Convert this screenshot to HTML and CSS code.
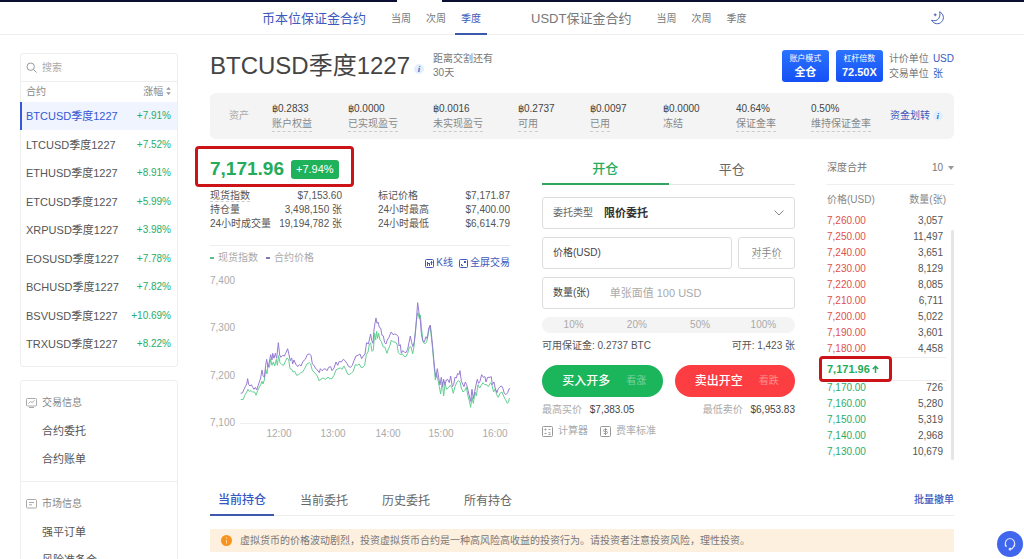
FILE: index.html
```html
<!DOCTYPE html>
<html lang="zh-CN">
<head>
<meta charset="utf-8">
<title>BTCUSD季度1227</title>
<link rel="stylesheet" href="styles.css">
</head>
<body>
<div class="top-strip"><span class="strip-gap"></span></div>
<header class="site-header">
  <nav class="contract-nav">
    <a class="nav-title active" href="#coin">币本位保证金合约</a>
    <a class="nav-sub" href="#c1">当周</a>
    <a class="nav-sub" href="#c2">次周</a>
    <a class="nav-sub active" href="#c3">季度</a>
  </nav>
  <nav class="contract-nav">
    <a class="nav-title" href="#usdt">USDT保证金合约</a>
    <a class="nav-sub" href="#u1">当周</a>
    <a class="nav-sub" href="#u2">次周</a>
    <a class="nav-sub" href="#u3">季度</a>
  </nav>
  <button class="theme-btn" aria-label="夜间模式">
    <svg width="14" height="14" viewBox="0 0 14 14" fill="none" stroke="#4560b8" stroke-width="1"><path d="M8.600.8a6.200 6.200 0 1 1-8 8.400c3 1.300 5.800.3 7.200-1.900C9 5.400 9.200 3 8.600.8z"/><path d="M4.200 2.400v2.800M2.800 3.800h2.800"/></svg>
  </button>
</header>

<div class="page">
  <aside class="sidebar">
    <section class="panel">
      <div class="search">
        <svg width="11" height="11" viewBox="0 0 11 11" fill="none" stroke="#999"><circle cx="4.700" cy="4.700" r="3.700"/><path d="M7.500 7.500l3 3"/></svg>
        <input type="text" placeholder="搜索" aria-label="搜索">
      </div>
      <table class="contracts">
        <thead><tr><th>合约</th><th>涨幅 <svg width="5" height="8" viewBox="0 0 5 8" fill="#999"><path d="M2.500 0L4.800 2.800H.2zM2.500 8L4.800 5.200H.2z"/></svg></th></tr></thead>
        <tbody>
          <tr class="current"><td>BTCUSD季度1227</td><td>+7.91%</td></tr>
          <tr><td>LTCUSD季度1227</td><td>+7.52%</td></tr>
          <tr><td>ETHUSD季度1227</td><td>+8.91%</td></tr>
          <tr><td>ETCUSD季度1227</td><td>+5.99%</td></tr>
          <tr><td>XRPUSD季度1227</td><td>+3.98%</td></tr>
          <tr><td>EOSUSD季度1227</td><td>+7.78%</td></tr>
          <tr><td>BCHUSD季度1227</td><td>+7.82%</td></tr>
          <tr><td>BSVUSD季度1227</td><td>+10.69%</td></tr>
          <tr><td>TRXUSD季度1227</td><td>+8.22%</td></tr>
        </tbody>
      </table>
    </section>
    <section class="panel menu">
      <div class="menu-group">
        <h2><svg width="11" height="10" viewBox="0 0 11 10" fill="none" stroke="#aaa"><rect x=".5" y=".5" width="10" height="7.500" rx="1"/><path d="M2.500 5.500l2-2 1.500 1 2.500-2M3 9.500h5"/></svg>交易信息</h2>
        <a href="#orders">合约委托</a>
        <a href="#bills">合约账单</a>
      </div>
      <div class="menu-group">
        <h2><svg width="11" height="10" viewBox="0 0 11 10" fill="none" stroke="#aaa"><rect x=".5" y=".5" width="10" height="8.500" rx="1"/><path d="M3 3.500h5M3 5.800h3"/></svg>市场信息</h2>
        <a href="#liquidation">强平订单</a>
        <a href="#fund">风险准备金</a>
      </div>
    </section>
  </aside>

  <main class="main">
    <div class="title-row">
      <h1>BTCUSD季度1227</h1>
      <span class="info">i</span>
      <p class="countdown">距离交割还有<br>30天</p>
      <div class="modes">
        <button class="mode"><small>账户模式</small><b>全仓</b></button>
        <button class="mode"><small>杠杆倍数</small><b>72.50X</b></button>
      </div>
      <dl class="units">
        <dt>计价单位</dt><dd><a href="#usd">USD</a></dd>
        <dt>交易单位</dt><dd><a href="#cont">张</a></dd>
      </dl>
    </div>

    <section class="assets">
      <h2>资产</h2>
      <div><b>฿0.2833</b><span class="hint">账户权益</span></div>
      <div><b>฿0.0000</b><span class="hint">已实现盈亏</span></div>
      <div><b>฿0.0016</b><span class="hint">未实现盈亏</span></div>
      <div><b>฿0.2737</b><span class="hint">可用</span></div>
      <div><b>฿0.0097</b><span class="hint">已用</span></div>
      <div><b>฿0.0000</b><span>冻结</span></div>
      <div><b>40.64%</b><span class="hint">保证金率</span></div>
      <div><b>0.50%</b><span class="hint">维持保证金率</span></div>
      <a href="#transfer">资金划转 <span class="info">i</span></a>
    </section>

    <div class="market">
      <section class="quote">
        <div class="price-line"><strong>7,171.96</strong><span class="change">+7.94%</span><i class="mark mark-price"></i></div>
        <div class="stats">
          <dl><dt><span class="hint">现货指数</span></dt><dd>$7,153.60</dd><dt>持仓量</dt><dd>3,498,150 张</dd><dt>24小时成交量</dt><dd>19,194,782 张</dd></dl>
          <dl><dt>标记价格</dt><dd>$7,171.87</dd><dt>24小时最高</dt><dd>$7,400.00</dd><dt>24小时最低</dt><dd>$6,614.79</dd></dl>
        </div>
        <div class="chart-head">
          <p class="legend"><span class="spot">现货指数</span><span class="contract">合约价格</span></p>
          <p class="chart-links">
            <a href="#k"><svg width="9" height="9" viewBox="0 0 9 9" fill="none" stroke="#3d59bd"><rect x=".5" y=".5" width="8" height="8" rx="1"/><path d="M2.500 3v4M4.500 4v3M6.500 2v4M2 4.500h3M5.500 3.500h2"/></svg>K线</a>
            <a href="#full"><svg width="9" height="9" viewBox="0 0 9 9" fill="none" stroke="#3d59bd"><rect x=".5" y=".5" width="8" height="8" rx="1"/><path d="M5 2.500h1.500V4M2.500 5v1.500H4M6.500 2.500L5 4"/></svg>全屏交易</a>
          </p>
        </div>
        <svg class="chart" viewBox="0 0 300 170" role="img" aria-label="价格走势">
          <path d="M30 150.500H300" stroke="#eee"/>
          <g class="axis"><text x="0" y="11">7,400</text><text x="0" y="58">7,300</text><text x="0" y="106">7,200</text><text x="0" y="153">7,100</text></g>
          <g class="axis time"><text x="69" y="164">12:00</text><text x="123" y="164">13:00</text><text x="178" y="164">14:00</text><text x="231" y="164">15:00</text><text x="285" y="164">16:00</text></g>
          <g class="series" transform="translate(20 17) scale(.3333)">
            <polyline stroke="#62cf92" points="32,329 40,328 44,316 49,308 54,298 58,304 63,302 68,306 74,306 78,316 83,302 88,292 92,284 96,274 99,282 103,270 107,238 111,252 114,226 118,232 122,208 126,226 130,216 134,228 139,208 142,226 146,197 150,218 156,224 161,226 167,212 171,204 176,208 180,236 185,238 189,246 194,244 200,256 206,254 212,248 218,246 224,236 231,222 238,218 242,222 246,238 251,246 256,250 262,258 267,272 273,268 279,264 286,268 294,262 300,266 306,266 312,256 318,240 325,236 331,234 336,238 342,228 347,238 353,252 359,254 365,248 370,244 376,224 382,226 388,222 393,232 399,232 404,226 409,194 414,186 418,164 422,158 426,184 430,180 434,130 437,150 440,124 443,145 446,130 450,150 454,154 459,170 465,172 471,190 475,178 480,166 484,150 490,156 496,156 501,162 505,188 511,194 517,192 522,199 528,200 533,190 538,172 543,170 548,192 552,170 557,115 561,80 564,68 568,86 571,75 574,110 579,155 584,162 590,156 595,130 600,106 603,130 608,178 612,225 616,270 620,254 624,270 628,290 632,312 637,276 641,318 645,282 650,298 656,292 661,286 666,294 670,310 675,290 680,278 685,272 690,275 694,294 699,306 704,302 709,292 714,318 718,332 722,352 726,322 730,340 735,306 739,318 744,284 749,294 754,286 759,278 764,284 770,284 775,290 782,278 786,286 791,306 796,296 800,314 805,322 810,310 816,306 821,318 826,328 832,340 836,336 838,324"/>
            <polyline stroke="#967bd3" points="32,310 38,308 42,298 46,290 50,282 53,266 56,284 60,288 64,284 68,292 72,298 76,292 80,300 84,288 88,276 92,264 96,240 99,256 103,262 107,226 110,208 114,232 118,216 122,194 126,210 128,190 132,205 136,190 140,205 145,158 149,195 153,202 158,196 163,198 168,188 173,176 177,194 181,212 185,204 188,222 192,210 197,222 203,230 208,224 213,228 219,214 226,208 232,194 238,192 243,196 247,222 252,226 256,234 262,240 268,248 271,236 276,242 281,238 286,236 291,242 296,232 302,230 306,242 312,234 318,216 323,226 328,214 334,216 340,208 345,212 351,220 356,230 362,232 367,226 372,212 378,198 384,196 390,192 395,206 400,198 405,192 408,170 410,158 415,162 418,150 422,132 425,150 429,160 432,120 435,100 438,84 441,100 444,96 448,112 452,114 456,136 460,138 464,158 468,162 472,150 477,142 480,134 484,126 489,134 494,132 500,134 505,140 507,168 511,164 514,190 518,182 523,186 528,188 533,178 537,158 541,138 545,158 549,170 553,155 557,120 560,80 563,38 567,68 571,90 574,130 578,152 583,156 588,140 592,146 596,115 601,106 604,130 608,170 611,205 615,245 618,262 622,236 626,262 630,285 634,262 638,290 641,268 645,284 649,270 653,268 658,278 662,258 667,290 671,284 675,262 679,264 683,250 687,254 690,242 694,272 698,282 702,290 706,276 710,284 714,300 718,318 722,334 726,298 730,326 734,305 738,285 742,268 746,280 750,274 755,254 760,262 765,260 768,276 773,262 780,262 784,260 787,284 792,276 796,296 801,308 805,296 810,290 815,288 819,296 823,310 828,314 833,308 836,300 839,294"/>
          </g>
        </svg>
      </section>

      <form class="order" onsubmit="return false">
        <div class="order-tabs"><button type="button" class="active">开仓</button><button type="button">平仓</button></div>
        <div class="field">
          <label class="soft" for="kind">委托类型</label>
          <select id="kind"><option>限价委托</option></select>
          <svg width="10" height="6" viewBox="0 0 10 6" fill="none" stroke="#888"><path d="M.5.5L5 5 9.500.5"/></svg>
        </div>
        <div class="field-row">
          <div class="field"><label for="price">价格(USD)</label><input id="price" type="text"></div>
          <button type="button" class="rival"><span class="hint">对手价</span></button>
        </div>
        <div class="field"><label for="qty">数量(张)</label><input id="qty" type="text" placeholder="单张面值 100 USD"></div>
        <div class="percents"><button type="button">10%</button><button type="button">20%</button><button type="button">50%</button><button type="button">100%</button></div>
        <p class="pair avail"><span>可用保证金: 0.2737 BTC</span><span>可开: 1,423 张</span></p>
        <div class="actions">
          <button type="button" class="buy">买入开多<small>看涨</small></button>
          <button type="button" class="sell">卖出开空<small>看跌</small></button>
        </div>
        <p class="pair limits"><span>最高买价 <b>$7,383.05</b></span><span>最低卖价 <b>$6,953.83</b></span></p>
        <p class="tools">
          <a href="#calc"><svg width="11" height="11" viewBox="0 0 11 11" fill="none" stroke="#999"><rect x=".5" y=".5" width="10" height="10" rx="1"/><path d="M2.500 3.500h2M3.500 2.500v2M6.500 3.500h2M2.500 7.500h2M6.500 6.800h2M6.500 8.500h2"/></svg>计算器</a>
          <a href="#fees"><svg width="11" height="11" viewBox="0 0 11 11" fill="none" stroke="#999"><rect x=".5" y=".5" width="10" height="10" rx="1"/><path d="M7.200 3.500H4.500a1 1 0 0 0 0 2h2a1 1 0 0 1 0 2H3.800M5.500 2v7"/></svg>费率标准</a>
        </p>
      </form>

      <section class="book">
        <div class="depth"><label for="depth">深度合并</label><select id="depth"><option>10</option></select><svg width="6" height="4" viewBox="0 0 6 4" fill="#999"><path d="M0 0h6L3 4z"/></svg></div>
        <div class="book-body">
          <table>
            <thead><tr><th>价格(USD)</th><th>数量(张)</th></tr></thead>
            <tbody class="asks">
              <tr><td>7,260.00</td><td>3,057</td></tr>
              <tr><td>7,250.00</td><td>11,497</td></tr>
              <tr><td>7,240.00</td><td>3,651</td></tr>
              <tr><td>7,230.00</td><td>8,129</td></tr>
              <tr><td>7,220.00</td><td>8,085</td></tr>
              <tr><td>7,210.00</td><td>6,711</td></tr>
              <tr><td>7,200.00</td><td>5,022</td></tr>
              <tr><td>7,190.00</td><td>3,601</td></tr>
              <tr><td>7,180.00</td><td>4,458</td></tr>
            </tbody>
            <tbody class="last"><tr><td colspan="2"><div>7,171.96<svg width="7" height="8" viewBox="0 0 7 8" fill="none" stroke="#1eac59" stroke-width="1.500"><path d="M3.500 8V1.500M.8 4l2.700-2.700L6.200 4"/></svg><i class="mark mark-last"></i></div></td></tr></tbody>
            <tbody class="bids">
              <tr><td>7,170.00</td><td>726</td></tr>
              <tr><td>7,160.00</td><td>5,280</td></tr>
              <tr><td>7,150.00</td><td>5,319</td></tr>
              <tr><td>7,140.00</td><td>2,968</td></tr>
              <tr><td>7,130.00</td><td>10,679</td></tr>
            </tbody>
          </table>
          <span class="scroll-thumb"></span>
        </div>
      </section>
    </div>

    <nav class="position-tabs">
      <button class="active">当前持仓</button><button>当前委托</button><button>历史委托</button><button>所有持仓</button>
      <a href="#cancel">批量撤单</a>
    </nav>
    <p class="notice"><svg width="11" height="11" viewBox="0 0 11 11"><circle cx="5.500" cy="5.500" r="5.500" fill="#f7931e"/><path d="M5.500 2.500v1.300M5.500 5v3.500" stroke="#ffd9a0"/></svg>虚拟货币的价格波动剧烈，投资虚拟货币合约是一种高风险高收益的投资行为。请投资者注意投资风险，理性投资。</p>
  </main>
</div>
<button class="support" aria-label="在线客服">
  <svg width="14" height="14" viewBox="0 0 14 14" fill="none" stroke="#dfe6ff" stroke-width="1.200"><path d="M2.500 9.500C1.500 5 3.500 1.500 7 1.500s5.500 3.500 4.500 8"/><path d="M2.300 7.200l1.200 2.600M11.700 7.200l-1.200 2.600c-.6 1.400-1.600 2.200-3 2.400"/><circle cx="7" cy="12.200" r=".8" fill="#dfe6ff"/></svg>
</button>
</body>
</html>
```
FILE: styles.css
```css
* { box-sizing: border-box; }
body, h1, h2, p, dl, dd { margin: 0; }
body {
  height: 100vh;
  overflow: hidden;
  background: #fff;
  color: #555;
  font: 10px/14px "Liberation Sans", "Noto Sans CJK SC", sans-serif;
}
a { color: #3d59bd; text-decoration: none; }
button, input, select {
  margin: 0;
  padding: 0;
  border: 0;
  background: none;
  color: inherit;
  font: inherit;
  appearance: none;
  outline: 0;
}
button { cursor: pointer; }
h1, h2, th { font-weight: 400; }
b { font-weight: 400; }
svg { flex: none; }
table { border-collapse: collapse; width: 100%; }
th, td { padding: 0; text-align: left; }
th:last-child, td:last-child { text-align: right; }

.top-strip { display: flex; height: 2px; background: #0b0f33; padding-left: 397px; }
.strip-gap { width: 45px; background: #fff; }

.site-header {
  display: flex;
  height: 33px;
  padding: 0 79px 0 262px;
  border-bottom: 1px solid #eee;
}
.contract-nav { display: flex; }
.contract-nav + .contract-nav { margin-left: 41px; }
.nav-title { margin-right: 19px; font-size: 13px; line-height: 33px; color: #777; }
.nav-sub { height: 33px; padding: 0 6px; margin-right: 3px; line-height: 34px; color: #777; }
.nav-sub.active { border-bottom: 2px solid #3d59ad; }
.contract-nav .active { color: #3d59bd; }
.theme-btn { display: flex; align-items: center; margin-left: auto; }

.page {
  display: grid;
  grid-template-columns: 158px minmax(0, 1fr);
  gap: 32px;
  padding: 12px 70px 0 20px;
}
.sidebar { padding-top: 6px; }
.panel { border: 1px solid #eee; border-radius: 3px; margin-bottom: 13px; padding-bottom: 8px; }
.search { display: flex; align-items: center; gap: 5px; height: 28px; padding: 0 5px; border-bottom: 1px solid #eee; }
.search input { flex: 1; min-width: 0; }
::placeholder { color: #aaa; opacity: 1; }
.contracts th { height: 20px; color: #888; }
.contracts tr > :first-child { padding-left: 5px; }
.contracts tr > :last-child { padding-right: 6px; }
.contracts td { height: 28px; color: #27ae67; }
.contracts tr:nth-child(even) td { height: 29px; }
.contracts td:first-child { font-size: 11px; color: #555; }
.contracts .current { background: #f0f4fe; }
.contracts .current td:first-child { color: #3558d4; box-shadow: -1px 0 #3558d4, inset 1px 0 #3558d4; }

.menu { padding: 0; }
.menu-group { padding: 8px 5px; }
.menu-group + .menu-group { border-top: 1px solid #eee; }
.menu-group h2 { display: flex; align-items: center; gap: 5px; height: 28px; font-size: 10px; color: #888; }
.menu-group a { display: block; padding-left: 16px; font-size: 11px; line-height: 28px; color: #555; }

.title-row { display: flex; align-items: center; height: 38px; }
.title-row h1 { font-size: 24px; line-height: 36px; color: #444; }
.info {
  display: inline-block;
  width: 10px;
  height: 10px;
  border-radius: 5px;
  background: #e3effc;
  color: #2f6fd0;
  font: italic bold 9px/10px "Liberation Serif", serif;
  text-align: center;
}
.title-row .info { margin: 6px 9px 0 4px; }
.countdown { color: #777; }
.modes { display: flex; gap: 7px; margin-left: auto; }
.mode {
  display: flex;
  flex-direction: column;
  align-items: center;
  justify-content: center;
  width: 47px;
  height: 32px;
  border-radius: 3px;
  background: linear-gradient(#2b73ff, #1450f5);
  color: #fff;
}
.mode small { font-size: 8px; line-height: 12px; }
.mode b { font-size: 11px; line-height: 14px; font-weight: 700; }
.units { display: grid; grid-template-columns: auto auto; column-gap: 4px; margin-left: 6px; line-height: 15px; color: #777; }
.units dt, .units dd { white-space: nowrap; }

.hint { border-bottom: 1px dashed #ccc; }
.assets {
  display: grid;
  grid-template-columns: 43fr 76fr 85fr 85fr 72fr 73fr 73fr 75fr 79fr 64fr;
  align-items: center;
  height: 46px;
  margin-top: 8px;
  padding-left: 19px;
  border-radius: 6px;
  background: #f4f4f4;
}
.assets > * { min-width: 0; white-space: nowrap; }
.assets h2 { font-size: 10px; color: #aaa; }
.assets div { display: flex; flex-direction: column; align-items: flex-start; }
.assets b { line-height: 15px; color: #444; }
.assets div span { color: #888; line-height: 15px; }

.market {
  display: grid;
  grid-template-columns: 300fr 253fr 127fr;
  column-gap: 32px;
  padding-top: 13px;
}
.market > * { min-width: 0; }
.price-line { position: relative; display: flex; align-items: center; gap: 7px; height: 34px; color: #24ab5c; }
.price-line strong { font-size: 19px; line-height: 34px; }
.change { padding: 0 5px; border-radius: 3px; background: #1fb25a; color: #fff; font-size: 11px; line-height: 19px; }
.mark { position: absolute; border: 3px solid #cc1418; border-radius: 4px; }
.mark-price { left: -15px; top: -6px; width: 159px; height: 41px; }
.mark-last { left: -8px; top: -2px; width: 73px; height: 26px; }
.stats { display: grid; grid-template-columns: 1fr 1fr; gap: 36px; padding: 3px 0 14px; border-bottom: 1px solid #eee; }
.stats dl { display: grid; grid-template-columns: auto auto; justify-content: space-between; white-space: nowrap; }
.stats dd { text-align: right; }
.chart-head { display: flex; justify-content: space-between; height: 27px; padding-top: 5px; white-space: nowrap; }
.legend { display: flex; gap: 8px; height: 14px; color: #aaa; }
.legend span { display: flex; align-items: center; gap: 4px; }
.legend span::before { content: ""; width: 4px; height: 2px; background: #5bbf8a; }
.legend .contract::before { background: #8276b8; }
.chart-links { display: flex; gap: 6px; height: 19px; padding-top: 5px; }
.chart-links a { display: flex; align-items: center; gap: 2px; }
.chart { display: block; width: 100%; }
.axis { fill: #aaa; font-size: 10px; }
.time { text-anchor: middle; }
.series { fill: none; }
.series polyline { vector-effect: non-scaling-stroke; stroke-width: 1; stroke-linejoin: round; }

.order { display: flex; flex-direction: column; }
.order-tabs { display: grid; grid-template-columns: 1fr 1fr; height: 33px; margin-bottom: 12px; border-bottom: 1px solid #e5e5e5; }
.order-tabs button { height: 33px; font-size: 13px; padding-top: 2px; color: #666; }
.order-tabs .active { border-bottom: 2px solid #31a55b; color: #27ab5e; font-weight: 500; }
.field { display: flex; align-items: center; height: 32px; margin-bottom: 8px; padding: 0 10px; border: 1px solid #ddd; border-radius: 3px; }
.field label { color: #444; white-space: nowrap; }
.field .soft { color: #666; }
.field select { flex: 1; margin-left: 11px; font-size: 11px; font-weight: 700; color: #333; }
.field input { flex: 1; min-width: 0; margin-left: 20px; font-size: 11px; }
.field-row { display: flex; gap: 6px; }
.field-row .field { flex: 1; min-width: 0; }
.rival { flex: none; width: 57px; height: 32px; border: 1px solid #ddd; border-radius: 3px; color: #888; }
.percents { display: grid; grid-template-columns: repeat(4, 1fr); border-radius: 8px; background: #f4f4f4; color: #aaa; line-height: 16px; }
.pair { display: flex; justify-content: space-between; white-space: nowrap; }
.avail { padding: 6px 0 12px; }
.actions { display: grid; grid-template-columns: 1fr 1fr; gap: 12px; }
.actions button { display: flex; align-items: center; justify-content: center; gap: 16px; height: 32px; padding-left: 4px; border-radius: 16px; color: #fff; font-size: 12px; font-weight: 500; }
.actions small { font-size: 10px; font-weight: 400; opacity: .4; }
.buy { background: #1bb55b; }
.sell { background: #fc3d41; }
.limits { padding: 6px 0 7px; color: #aaa; }
.limits b { margin-left: 5px; color: #444; }
.tools { display: flex; gap: 12px; }
.tools a { display: flex; align-items: center; gap: 5px; color: #aaa; }

.depth { display: flex; align-items: center; height: 33px; border-bottom: 1px solid #eee; color: #777; }
.depth select { margin: 0 4px 0 auto; }
.book-body { display: flex; gap: 5px; padding-top: 7px; }
.book-body table { flex: 1; }
.book th { color: #888; }
.book tr { height: 16px; }
.book thead tr { height: 21px; }
.book th { padding-bottom: 5px; }
.book td:last-child { padding-right: 3px; }
.asks td:first-child { color: #e0504f; }
.bids td:first-child { color: #2aae6a; }
.book .last tr { height: 23px; }
.book .last td { border-top: 1px solid #eee; border-bottom: 1px solid #eee; color: #1eac59; }
.last div { position: relative; display: flex; align-items: center; gap: 2px; height: 21px; font-size: 11px; font-weight: 700; }
.scroll-thumb { width: 3px; margin-top: 38px; border-radius: 2px; background: #e5e5e5; }

.position-tabs { display: flex; gap: 18px; height: 31px; margin-top: 25px; border-bottom: 1px solid #eee; }
.position-tabs button { height: 31px; padding: 0 8px; font-size: 12px; color: #666; }
.position-tabs .active { border-bottom: 2px solid #3d59ad; color: #3558c4; font-weight: 500; }
.position-tabs a { margin-left: auto; line-height: 29px; font-weight: 500; }
.notice { display: flex; align-items: center; gap: 8px; height: 23px; margin-top: 13px; padding: 0 11px; background: #fdf0df; color: #777; }

.support {
  position: fixed;
  right: 1px;
  bottom: 2px;
  display: flex;
  align-items: center;
  justify-content: center;
  width: 26px;
  height: 26px;
  border-radius: 13px;
  background: #3f66ec;
}
```
